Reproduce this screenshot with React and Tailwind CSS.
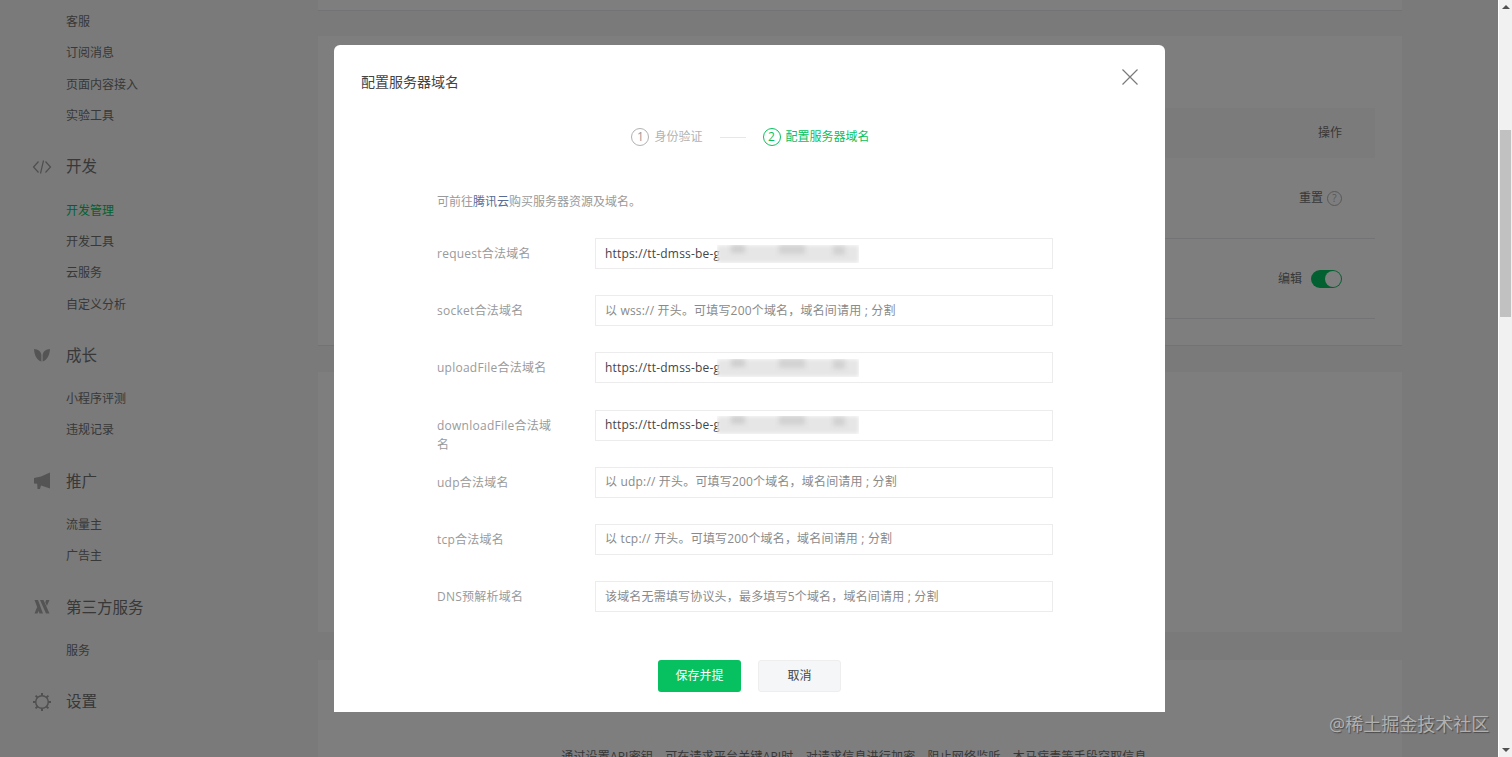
import React from "react";

const CodeIcon = () => (
  <svg width="20" height="20" viewBox="0 0 20 20" fill="none" stroke="#9c9c9c" strokeWidth="1.200">
    <path d="M6.500 4.500 1.500 10l5 5.500M13.500 4.500l5 5.500-5 5.500M11.500 3.500 8.500 16.500" />
  </svg>
);
const LeafIcon = () => (
  <svg width="20" height="20" viewBox="0 0 20 20" fill="#a8a8a8">
    <path d="M2 4c4 .3 7 2.300 7.400 6V16.500C5 15.500 2.300 10.500 2 4z" />
    <path d="M18 4c-.3 5.500-2.500 11-7.400 12.500V10c.4-3.700 3.400-5.700 7.400-6z" />
  </svg>
);
const MegaIcon = () => (
  <svg width="20" height="20" viewBox="0 0 20 20" fill="#a8a8a8">
    <path d="M18 1.500v16L9 14.500l-1 3.500H5.500l-.3-5.200L2 12.500V7l7-1.500z" />
  </svg>
);
const ThirdIcon = () => (
  <svg width="20" height="20" viewBox="0 0 20 20" fill="#a8a8a8">
    <path d="M2.500 3h3.500l5 13.500H7.500z" />
    <path d="M8 3h3.500l6 13.500H14z" />
    <path d="M14 3h3.500l-2.600 6-1.500-3.500z" />
    <path d="M2.500 16.500 5.300 9.500l1.500 3.800-1.300 3.200z" />
  </svg>
);
const GearIcon = () => (
  <svg width="20" height="20" viewBox="0 0 20 20" fill="none" stroke="#a0a0a0">
    <circle cx="10" cy="10" r="6.300" strokeWidth="1.500" />
    <path strokeWidth="2" d="M10 1v2.500M10 16.500V19M1 10h2.500M16.500 10H19M3.600 3.600l1.800 1.800M14.600 14.600l1.800 1.800M3.600 16.400l1.800-1.800M14.600 5.400l1.800-1.800" />
  </svg>
);

const Item = ({ children, active }) => (
  <div className={`flex h-[31.300px] items-center pl-[66px] text-[12px] ${active ? "text-[#07c160]" : "text-[#707070]"}`}>{children}</div>
);
const Heading = ({ icon, children }) => (
  <div className="mt-[19.300px] mb-[12px] flex h-[32px] items-center text-[15.500px] text-[#707070]">
    <div className="ml-[32px] mr-[14px] flex w-[20px] justify-center">{icon}</div>
    {children}
  </div>
);

const Sidebar = () => (
  <div className="w-[318px] shrink-0 pt-[6.500px]">
    <Item>客服</Item>
    <Item>订阅消息</Item>
    <Item>页面内容接入</Item>
    <Item>实验工具</Item>
    <Heading icon={<CodeIcon />}>开发</Heading>
    <Item active>开发管理</Item>
    <Item>开发工具</Item>
    <Item>云服务</Item>
    <Item>自定义分析</Item>
    <Heading icon={<LeafIcon />}>成长</Heading>
    <Item>小程序评测</Item>
    <Item>违规记录</Item>
    <Heading icon={<MegaIcon />}>推广</Heading>
    <Item>流量主</Item>
    <Item>广告主</Item>
    <Heading icon={<ThirdIcon />}>第三方服务</Heading>
    <Item>服务</Item>
    <Heading icon={<GearIcon />}>设置</Heading>
  </div>
);

const Main = () => (
  <div className="flex w-[1084px] shrink-0 flex-col text-[12px] text-[#707070]">
    <div className="h-[11px] shrink-0 border-b border-[#e7e7eb] bg-[#fdfdfd]" />
    <div className="mt-[25px] flex h-[310px] shrink-0 flex-col border-b border-[#e7e7eb] bg-[#fdfdfd] px-[27px] pt-[72px]">
      <div className="flex h-[50px] shrink-0 items-center justify-end bg-[#f6f6f6] pr-[33px]">操作</div>
      <div className="flex h-[81px] shrink-0 items-center justify-end gap-[4px] border-b border-[#e7e7eb] pr-[33px]">
        <span>重置</span>
        <span className="flex h-[15px] w-[15px] items-center justify-center rounded-full border border-[#b0b0b0] text-[10px] leading-none text-[#b0b0b0]">?</span>
      </div>
      <div className="flex h-[80px] shrink-0 items-center justify-end gap-[9px] border-b border-[#e7e7eb] pr-[33px]">
        <span className="pt-[1px]">编辑</span>
        <span className="flex h-[18px] w-[31px] items-center justify-end rounded-full bg-[#07c160] pr-[1px]">
          <span className="h-[16px] w-[16px] rounded-full bg-white" />
        </span>
      </div>
    </div>
    <div className="mt-[26px] h-[260px] shrink-0 bg-[#fdfdfd]" />
    <div className="mt-[28px] flex h-[200px] shrink-0 justify-center bg-[#fdfdfd] pt-[88px]">
      <span className="mr-[12px] tracking-[0.18px]">通过设置API密钥，可在请求平台关键API时，对请求信息进行加密，阻止网络监听、木马病毒等手段窃取信息</span>
    </div>
  </div>
);

const Redact = () => (
  <div className="relative ml-[-3px] h-[18px] w-[142px] overflow-hidden">
    <div className="absolute inset-0 bg-[#e6e6e6] blur-[2px]" />
    <div className="absolute left-[14px] top-[0px] h-[8px] w-[14px] bg-[#cfcfcf] blur-[2px]" />
    <div className="absolute left-[62px] top-[0px] h-[9px] w-[26px] bg-[#d2d2d2] blur-[2px]" />
    <div className="absolute left-[116px] top-[1px] h-[9px] w-[12px] bg-[#d2d2d2] blur-[2px]" />
  </div>
);

const Row = ({ label, value, placeholder }) => (
  <div className="flex h-[31px] items-start">
    <div className="w-[158px] shrink-0 pt-[6px] pr-[38px] text-[12px] leading-[19.500px] tracking-[0.25px] text-[#9a9a9a]">{label}</div>
    <div className="flex h-[31px] w-[458px] items-center border border-[#ececec] bg-white pl-[9px] text-[12px] tracking-[0.18px]">
      {value ? (
        <>
          <span className="text-[#454545]">{value}</span>
          <Redact />
        </>
      ) : (
        <span className="text-[#8a8a8a]">{placeholder}</span>
      )}
    </div>
  </div>
);

const Modal = () => (
  <div className="absolute left-[334px] top-[45px] flex h-[667px] w-[831px] flex-col rounded-t-[6px] bg-white">
    <div className="ml-[27px] mt-[27px] h-[20px] text-[14px] leading-[20px] text-[#444444]">配置服务器域名</div>
    <svg className="absolute right-[27px] top-[24px]" width="16" height="16" viewBox="0 0 16 16" stroke="#7a7a7a" strokeWidth="1.200">
      <path d="M.5.500l15 15M15.500.500l-15 15" />
    </svg>
    <div className="mt-[35px] flex h-[20px] items-center justify-center pl-[2px] text-[12px]">
      <span className="flex h-[18px] w-[18px] items-center justify-center rounded-full border border-[#b2b2b2] text-[12px] text-[#9a9a9a]">1</span>
      <span className="ml-[5px] text-[#b2b2b2]">身份验证</span>
      <span className="mx-[17px] h-px w-[26px] bg-[#e7e7eb]" />
      <span className="flex h-[18px] w-[18px] items-center justify-center rounded-full border border-[#07c160] text-[12px] text-[#07c160]">2</span>
      <span className="ml-[5px] text-[#07c160]">配置服务器域名</span>
    </div>
    <div className="ml-[103px] mt-[45px] h-[20px] text-[12px] leading-[20px] text-[#9a9a9a]">
      可前往<span className="text-[#576b95]">腾讯云</span>购买服务器资源及域名。
    </div>
    <div className="ml-[103px] mt-[26px] flex flex-col gap-[26.200px]">
      <Row label="request合法域名" value="https://tt-dmss-be-g" />
      <Row label="socket合法域名" placeholder="以 wss:// 开头。可填写200个域名，域名间请用 ; 分割" />
      <Row label="uploadFile合法域名" value="https://tt-dmss-be-g" />
      <Row label="downloadFile合法域名" value="https://tt-dmss-be-g" />
      <Row label="udp合法域名" placeholder="以 udp:// 开头。可填写200个域名，域名间请用 ; 分割" />
      <Row label="tcp合法域名" placeholder="以 tcp:// 开头。可填写200个域名，域名间请用 ; 分割" />
      <Row label="DNS预解析域名" placeholder="该域名无需填写协议头，最多填写5个域名，域名间请用 ; 分割" />
    </div>
    <div className="mt-[48px] flex justify-center gap-[17px] text-[12px]">
      <button className="flex h-[32px] w-[83px] items-center justify-center rounded-[3px] bg-[#07c160] text-white">保存并提</button>
      <button className="flex h-[32px] w-[83px] items-center justify-center rounded-[3px] border border-[#eeeeee] bg-[#f5f6f7] text-[#454545]">取消</button>
    </div>
  </div>
);

const Scrollbar = () => (
  <div className="flex h-[757px] w-[14px] shrink-0 flex-col items-center border-l border-white bg-[#f1f1f1]">
    <svg className="mt-[5px] shrink-0" width="8" height="4" viewBox="0 0 8 4" fill="#505050"><path d="M4 0l4 4H0z" /></svg>
    <div className="mt-[121px] h-[187px] w-[11px] shrink-0 bg-[#c1c1c1]" />
    <svg className="mt-[431px] shrink-0" width="8" height="4" viewBox="0 0 8 4" fill="#505050"><path d="M0 0h8L4 4z" /></svg>
  </div>
);

export default function App() {
  return (
    <div className="flex h-[757px] w-[1512px] overflow-hidden font-['Open_Sans','Noto_Sans_CJK_SC',sans-serif]">
      <div className="relative flex w-[1498px] shrink-0 overflow-hidden bg-[#f5f5f5]">
        <Sidebar />
        <Main />
        <div className="absolute inset-0 bg-black/50" />
        <Modal />
        <div className="absolute left-[1329px] top-[711px] text-[18px] text-[#b0b0b0] [text-shadow:1px_1px_1px_#4a4a4a]">@稀土掘金技术社区</div>
      </div>
      <Scrollbar />
    </div>
  );
}
